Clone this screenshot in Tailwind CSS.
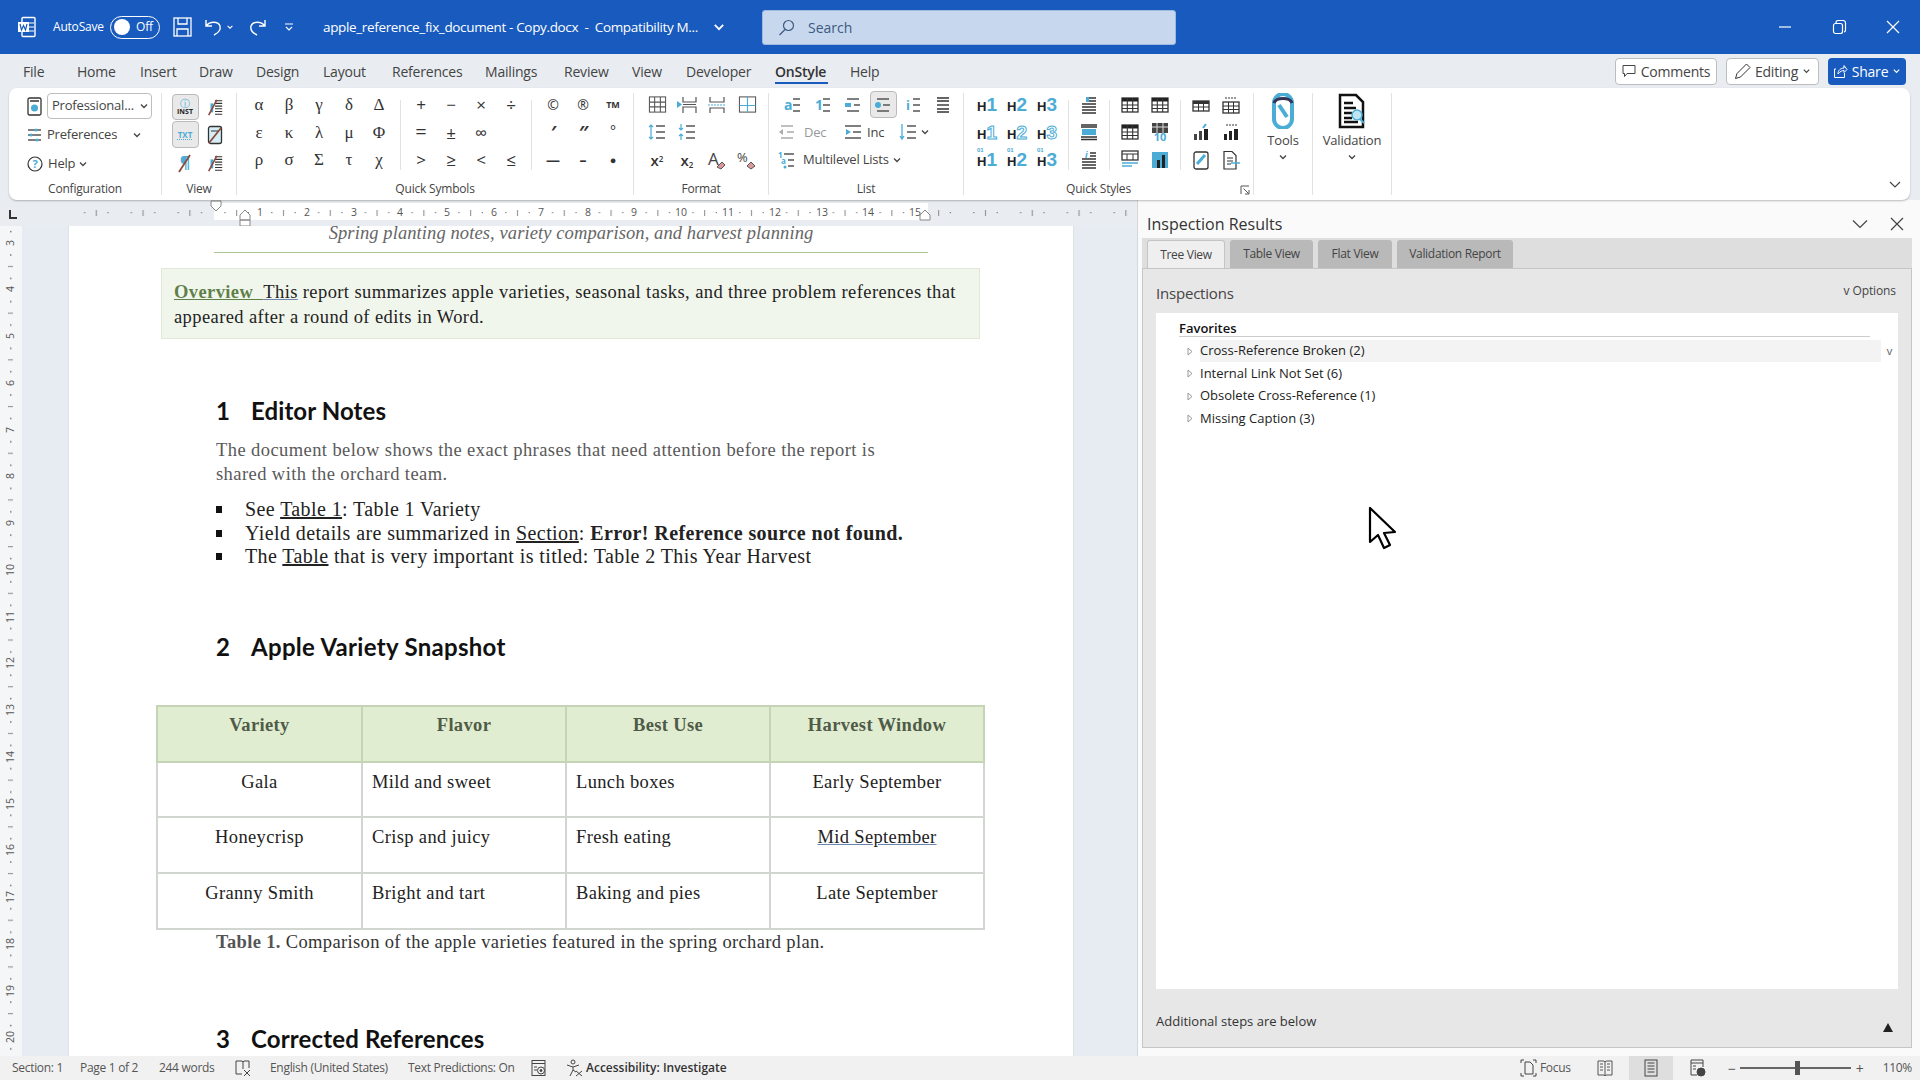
<!DOCTYPE html>
<html><head><meta charset="utf-8"><script src="https://cdn.jsdelivr.net/npm/@tailwindcss/browser@4"></script></head>
<body class="m-0">
<svg width="0" height="0" class="absolute">
<defs>
<symbol id="chev" viewBox="0 0 10 10"><path d="M2 3.500 5 6.500 8 3.500" fill="none" stroke="currentColor" stroke-width="1.300"/></symbol>
<symbol id="tb" viewBox="0 0 18 18"><rect x="1" y="2" width="16" height="14" fill="#fff" stroke="#333" stroke-width="1.300"/><rect x="1" y="2" width="16" height="3.500" fill="#222"/><path d="M1 9h16M1 12.500h16M6.300 2v14M11.700 2v14" stroke="#333" stroke-width="1.100"/></symbol>
<symbol id="tg" viewBox="0 0 20 20"><rect x="1.500" y="2" width="17" height="16" fill="none" stroke="#555" stroke-width="1.100"/><path d="M1.500 7.500h17M1.500 12.500h17M7 2v16M13 2v16" stroke="#555" stroke-width="1.100"/></symbol>
<symbol id="lines" viewBox="0 0 18 18"><path d="M3 2h12M3 5h12M3 13h12M3 16h12" stroke="#333" stroke-width="1.400"/><path d="M3 9h12" stroke="#333" stroke-width="1.400"/></symbol>
<symbol id="ind" viewBox="0 0 18 18"><path d="M9 3h7M9 9h7M9 15h7" stroke="#555" stroke-width="1.400"/></symbol>
<symbol id="liststrike" viewBox="0 0 20 20"><path d="M10 3h8M10 6h8M10 9h8M10 12h8M10 15h8M10 18h8" stroke="#333" stroke-width="1.200"/><rect x="5" y="6" width="3" height="10" fill="#4bacd6"/><path d="M3 19 12 2" stroke="#8c4a3c" stroke-width="1.800"/></symbol>
</defs>
</svg>
<div class="relative w-[1920px] h-[1080px] overflow-hidden flex flex-col bg-[#e9edf1] font-['Open_Sans',sans-serif] text-[#3b3b3b]">

<!-- Title bar -->
<div class="h-[54px] shrink-0 bg-[#185abd] text-white flex items-center text-[13px]">
  <div class="w-[53px] pl-[17px]"><svg width="20" height="22" viewBox="0 0 20 22"><rect x="5" y="1.500" width="13" height="19" rx="1" fill="none" stroke="#fff" stroke-width="1.400"/><rect x="1" y="6" width="11" height="10" fill="#fff"/><path d="M3 8 4.500 14 6.500 9.500 8.500 14 10 8" fill="none" stroke="#185abd" stroke-width="1.200"/><path d="M12 7h5M12 11h5M12 15h5" stroke="#fff"/></svg></div>
  <div class="w-[57px] text-[12px] tracking-[-0.2px]">AutoSave</div>
  <div class="w-[50px] h-[23px] rounded-full border border-white flex items-center pl-[3px] gap-[6px]"><span class="w-[16px] h-[16px] rounded-full bg-white"></span><span class="text-[12px] tracking-[-0.2px]">Off</span></div>
  <div class="ml-[13px] w-[20px]"><svg width="19" height="20" viewBox="0 0 19 20" fill="none" stroke="#fff" stroke-width="1.300"><rect x="1" y="1" width="17" height="18"/><path d="M5 1v6h9V1M4 19v-7h11v7"/></svg></div>
  <div class="ml-[11px] w-[18px]"><svg width="20" height="20" viewBox="0 0 20 20" fill="none" stroke="#fff" stroke-width="1.400"><path d="M2 3v6h6M2 9c4-5 12-5 14 0 1 4-2 7-6 9"/></svg></div>
  <svg class="ml-[4px]" width="8" height="10"><use href="#chev"/></svg>
  <div class="ml-[13px] w-[20px]"><svg width="20" height="20" viewBox="0 0 20 20" fill="none" stroke="#fff" stroke-width="1.400"><path d="M18 3v6h-6M18 9c-4-5-12-5-14 0-1 4 2 7 6 9"/></svg></div>
  <div class="ml-[17px] w-[39px]"><svg width="10" height="10" viewBox="0 0 10 10" fill="none" stroke="#fff" stroke-width="1.200"><path d="M1 2h8M2 5 5 8 8 5"/></svg></div>
  <div class="w-[378px] whitespace-nowrap text-[13.500px] tracking-[-0.35px]">apple_reference_fix_document - Copy.docx &nbsp;-&nbsp; Compatibility M...</div>
  <svg class="ml-[11px]" width="14" height="14"><use href="#chev"/></svg>
  <div class="ml-[36px] w-[414px] h-[35px] rounded-[3px] bg-[#c7d7ee] border border-[#9fb9de] flex items-center pl-[15px] gap-[13px] text-[#3d5a80] text-[14px]"><svg width="17" height="17" viewBox="0 0 17 17" fill="none" stroke="#3d5a80" stroke-width="1.200"><circle cx="10.500" cy="6.500" r="5"/><path d="M7 10.500 1.500 16"/></svg>Search</div>
  <div class="ml-auto flex items-center pr-[19px] gap-[38px]">
    <svg width="16" height="16" viewBox="0 0 16 16"><path d="M2 8h12" stroke="#fff" stroke-width="1.200"/></svg>
    <svg width="16" height="16" viewBox="0 0 16 16" fill="none" stroke="#fff" stroke-width="1.200"><rect x="2.500" y="4.500" width="9" height="10" rx="2"/><path d="M5 4c0-2 1-2.500 2-2.500h5c2 0 2.500 1 2.500 2.500v7c0 1-.5 2-1.500 2"/></svg>
    <svg width="16" height="16" viewBox="0 0 16 16"><path d="M2 2 14 14M14 2 2 14" stroke="#fff" stroke-width="1.200"/></svg>
  </div>
</div>

<!-- Tabs -->
<div class="h-[34px] shrink-0 flex items-center pl-[23px] text-[14px] text-[#444] tracking-[-0.2px]">
  <div class="w-[54px]">File</div><div class="w-[63px]">Home</div><div class="w-[59px]">Insert</div><div class="w-[57px]">Draw</div><div class="w-[67px]">Design</div><div class="w-[69px]">Layout</div><div class="w-[93px]">References</div><div class="w-[79px]">Mailings</div><div class="w-[68px]">Review</div><div class="w-[54px]">View</div><div class="w-[89px]">Developer</div>
  <div class="w-[75px] relative font-semibold text-[#333]">OnStyle<span class="absolute left-0 top-[21px] w-[53px] h-[2px] bg-[#185abd]"></span></div><div class="w-[60px]">Help</div>
  <div class="ml-auto flex items-center gap-[9px] pr-[14px]">
    <div class="w-[102px] h-[27px] rounded-[4px] bg-white border border-[#bdbdbd] flex items-center justify-center gap-[5px]"><svg width="14" height="14" viewBox="0 0 14 14" fill="none" stroke="#444"><path d="M1 1.500h12v8H5L2.500 12.500v-3H1z"/></svg>Comments</div>
    <div class="w-[93px] h-[27px] rounded-[4px] bg-white border border-[#bdbdbd] flex items-center justify-center gap-[4px]"><svg width="17" height="17" viewBox="0 0 17 17" fill="none" stroke="#333"><path d="M1.500 15.500 3 10.500 12.500 1l3.500 3.500L6.500 14z"/></svg>Editing<svg width="9" height="10"><use href="#chev"/></svg></div>
    <div class="w-[78px] h-[27px] rounded-[4px] bg-[#185abd] text-white flex items-center justify-center gap-[4px]"><svg width="15" height="15" viewBox="0 0 15 15" fill="none" stroke="#fff"><path d="M3 5H1.500v8.500h10V9M5 10c0-4 3-6 6-6V1.500L14 5.500l-3 3V6.500c-2 0-4 1-6 3.500z"/></svg>Share<svg width="9" height="10"><use href="#chev"/></svg></div>
  </div>
</div>

<!-- Ribbon -->
<div class="h-[112px] shrink-0 mx-[9px] mr-[10px] bg-white rounded-[8px] shadow-[0_1px_2px_rgba(0,0,0,0.25)] flex text-[13px] text-[#444] relative">
  <!-- Configuration -->
  <div class="w-[153px] my-[5px] border-r border-[#e2e2e2] flex flex-col">
    <div class="h-[84px] flex flex-col pl-[18px] tracking-[-0.2px]">
      <div class="h-[26px] flex items-center gap-[5px]"><svg width="15" height="19" viewBox="0 0 15 19"><rect x="1" y="1" width="13" height="17" rx="1.500" fill="#fff" stroke="#333" stroke-width="1.300"/><path d="M3 4h9" stroke="#333" stroke-width="1.500"/><circle cx="7.500" cy="11" r="3.500" fill="#4bacd6"/></svg><div class="w-[105px] h-[26px] rounded-[4px] border border-[#bdbdbd] flex items-center pl-[4px] justify-between pr-[2px]">Professional...<svg width="10" height="10"><use href="#chev"/></svg></div></div>
      <div class="h-[32px] flex items-center"><svg class="mr-[5px]" width="15" height="16" viewBox="0 0 15 16"><path d="M1 3h13M1 8h13M1 13h13" stroke="#555" stroke-width="1.300"/><circle cx="9" cy="3" r="1.500" fill="#4bacd6"/><circle cx="4" cy="8" r="1.500" fill="#4bacd6"/><circle cx="10" cy="13" r="1.500" fill="#4bacd6"/></svg><span class="w-[85px]">Preferences</span><svg width="10" height="10"><use href="#chev"/></svg></div>
      <div class="h-[26px] flex items-center"><svg class="mr-[5px]" width="16" height="16" viewBox="0 0 16 16"><circle cx="8" cy="8" r="7" fill="none" stroke="#333" stroke-width="1.200"/><text x="8" y="12" text-anchor="middle" font-size="11" font-weight="700" fill="#4bacd6">?</text></svg>Help<svg class="ml-[3px]" width="10" height="10"><use href="#chev"/></svg></div>
    </div>
    <div class="flex-1 text-center text-[12px] pt-[3px] tracking-[-0.2px]">Configuration</div>
  </div>
  <!-- View -->
  <div class="w-[75px] my-[5px] border-r border-[#e2e2e2] flex flex-col">
    <div class="h-[84px] grid grid-cols-[30px_30px] grid-rows-[27px_29px_28px] items-center justify-items-center pl-[8px]">
      <div class="w-[27px] h-[26px] rounded-[4px] border border-[#bbb] bg-[#e9e9e9] flex flex-col items-center justify-center leading-none"><span class="text-[10px] text-[#4bacd6]">ⓘ</span><span class="text-[7px] font-bold text-[#222]">INST</span></div>
      <svg width="18" height="20"><use href="#liststrike"/></svg>
      <div class="w-[27px] h-[27px] rounded-[4px] border border-[#bbb] bg-[#e9e9e9] flex items-center justify-center text-[8px] text-[#4bacd6] font-bold underline decoration-dotted">TXT</div>
      <svg width="16" height="20" viewBox="0 0 16 20"><rect x="1.500" y="1.500" width="13" height="17" rx="2" fill="#d6eef8" stroke="#333" stroke-width="1.300"/><path d="M4 6h8" stroke="#333"/><path d="M2 18 14 3" stroke="#8c4a3c" stroke-width="1.800"/></svg>
      <svg width="18" height="20" viewBox="0 0 18 20"><text x="9" y="15" text-anchor="middle" font-size="16" font-weight="700" fill="#4bacd6">¶</text><path d="M3 19 14 2" stroke="#8c4a3c" stroke-width="1.800"/></svg>
      <svg width="18" height="20"><use href="#liststrike"/></svg>
    </div>
    <div class="flex-1 text-center text-[12px] pt-[3px] tracking-[-0.2px]">View</div>
  </div>
  <!-- Quick Symbols -->
  <div class="w-[397px] my-[5px] border-r border-[#e2e2e2] flex flex-col">
    <div class="h-[84px] shrink-0 flex text-[#333]">
      <div class="ml-[7px] w-[150px] -mt-[2px] grid grid-cols-[repeat(5,30px)] grid-rows-[repeat(3,27.500px)] items-center justify-items-center font-['Liberation_Serif',serif] text-[17px]">
        <span>α</span><span>β</span><span>γ</span><span>δ</span><span>Δ</span><span>ε</span><span>κ</span><span>λ</span><span>μ</span><span>Φ</span><span>ρ</span><span>σ</span><span>Σ</span><span>τ</span><span>χ</span>
      </div>
      <div class="w-px h-[70px] mt-[7px] ml-[6px] bg-[#e2e2e2]"></div>
      <div class="w-[125px] pl-[5px] -mt-[2px] grid grid-cols-[repeat(4,30px)] grid-rows-[repeat(3,27.500px)] items-center justify-items-center text-[17px]">
        <span>+</span><span>−</span><span>×</span><span>÷</span><span class="text-[20px]">=</span><span>±</span><span>∞</span><span></span><span>&gt;</span><span>≥</span><span>&lt;</span><span>≤</span>
      </div>
      <div class="w-px h-[70px] mt-[7px] ml-[5px] bg-[#e2e2e2]"></div>
      <div class="pl-[6px] -mt-[2px] grid grid-cols-[repeat(3,30px)] grid-rows-[repeat(3,27.500px)] items-center justify-items-center text-[14px]">
        <span>©</span><span>®</span><span class="text-[9px] font-bold">TM</span><span class="font-bold italic text-[18px]">′</span><span class="font-bold italic text-[18px]">″</span><span class="-mt-[4px]">°</span><span class="font-bold">—</span><span class="font-bold">–</span><span class="text-[11px]">●</span>
      </div>
    </div>
    <div class="flex-1 text-center text-[12px] pt-[3px] tracking-[-0.2px]">Quick Symbols</div>
  </div>
  <!-- Format -->
  <div class="w-[135px] my-[5px] border-r border-[#e2e2e2] flex flex-col">
    <div class="h-[84px] shrink-0 -mt-[2px] grid grid-cols-[repeat(4,30px)] grid-rows-[repeat(3,27.500px)] items-center justify-items-center pl-[8px] text-[#333]">
      <svg width="19" height="19"><use href="#tg"/></svg>
      <svg width="20" height="18" viewBox="0 0 20 18" fill="none" stroke="#555" stroke-width="1.200"><path d="M6 1v5h13V1M6 17v-6h13v6M6 8.500h13"/><path d="M0 5v7l5-3.500z" fill="#4bacd6" stroke="none"/></svg>
      <svg width="18" height="18" viewBox="0 0 18 18" fill="none" stroke="#555" stroke-width="1.200"><path d="M2 1v5h14V1M2 17v-5h14v5"/><path d="M0 9h18" stroke="#4bacd6" stroke-dasharray="2 1"/></svg>
      <svg width="19" height="19" viewBox="0 0 20 20"><rect x="1.500" y="2" width="17" height="16" fill="none" stroke="#555" stroke-width="1.100"/><path d="M1.500 11h17M10 2v16" stroke="#4bacd6" stroke-width="1.200"/></svg>
      <svg width="18" height="18" viewBox="0 0 18 18"><path d="M3 2v14M1 4l2-2 2 2M1 14l2 2 2-2" fill="none" stroke="#4bacd6" stroke-width="1.200"/><path d="M8 3h9M8 9h9M8 15h9" stroke="#555" stroke-width="1.300"/></svg>
      <svg width="18" height="18" viewBox="0 0 18 18"><path d="M3 1v6M1 5l2 2 2-2M3 17v-6M1 13l2-2 2 2" fill="none" stroke="#4bacd6" stroke-width="1.200"/><path d="M8 3h9M8 9h9M8 15h9" stroke="#555" stroke-width="1.300"/></svg>
      <span></span><span></span>
      <span class="text-[15px] font-semibold">x<sup class="text-[8px]">2</sup></span>
      <span class="text-[15px] font-semibold">x<sub class="text-[8px]">2</sub></span>
      <svg width="20" height="20" viewBox="0 0 20 20"><text x="1" y="15" font-size="17" fill="#444">A</text><path d="M10 17l5-5 3 3-4 4z" fill="#d99" stroke="#555"/></svg>
      <svg width="20" height="20" viewBox="0 0 20 20"><text x="0" y="12" font-size="13" fill="#444">%</text><path d="M10 16l4-4 4 4-4 3z" fill="#d99" stroke="#555"/></svg>
    </div>
    <div class="flex-1 text-center text-[12px] pt-[5px] tracking-[-0.2px]">Format</div>
  </div>
  <!-- List -->
  <div class="w-[195px] my-[5px] border-r border-[#e2e2e2] flex flex-col">
    <div class="h-[84px] shrink-0 -mt-[2px] flex flex-col pl-[9px] tracking-[-0.2px]">
      <div class="h-[27.500px] grid grid-cols-[repeat(6,30px)] items-center justify-items-center">
        <span class="relative w-[18px] h-[18px]"><span class="absolute left-0 top-0 text-[14px] font-bold text-[#4bacd6] leading-[18px]">a</span><svg class="absolute left-0 top-0" width="18" height="18"><use href="#ind"/></svg></span>
        <span class="relative w-[18px] h-[18px]"><span class="absolute left-[1px] top-0 text-[14px] font-bold text-[#4bacd6] leading-[18px]">1</span><svg class="absolute left-0 top-0" width="18" height="18"><use href="#ind"/></svg></span>
        <svg width="18" height="18" viewBox="0 0 18 18"><rect x="1" y="7" width="6" height="4" fill="#4bacd6"/><path d="M3 3h12M10 9h6M3 15h12" stroke="#555" stroke-width="1.400"/></svg>
        <span class="w-[27px] h-[27px] rounded-[4px] border border-[#bbb] bg-[#e9e9e9] flex items-center justify-center"><svg width="18" height="18" viewBox="0 0 18 18"><circle cx="4" cy="9" r="3" fill="#4bacd6"/><path d="M3 3h12M9 9h7M3 15h12" stroke="#555" stroke-width="1.400"/></svg></span>
        <span class="relative w-[18px] h-[18px]"><span class="absolute left-[2px] top-0 text-[13px] font-bold text-[#4bacd6] leading-[18px]">i</span><svg class="absolute left-0 top-0" width="18" height="18"><use href="#ind"/></svg></span>
        <svg width="18" height="18"><use href="#lines"/></svg>
      </div>
      <div class="h-[27.500px] flex items-center"><svg width="18" height="18" viewBox="0 0 18 18"><path d="M3 3h12M9 9h7M3 15h12" stroke="#aaa" stroke-width="1.400"/><path d="M1 9 5 6v6z" fill="#aaa"/></svg><span class="ml-[8px] w-[40px] text-[#999]">Dec</span><svg width="18" height="18" viewBox="0 0 18 18"><path d="M1 3h16M9 9h8M1 15h16" stroke="#555" stroke-width="1.400"/><path d="M7 9 2 6v6z" fill="#4bacd6"/></svg><span class="ml-[5px] w-[32px]">Inc</span><svg width="18" height="18" viewBox="0 0 18 18"><path d="M3 1v15M1 13l2 3 2-3" fill="none" stroke="#4bacd6" stroke-width="1.300"/><path d="M8 3h9M8 9h9M8 15h9" stroke="#555" stroke-width="1.400"/></svg><svg class="ml-[3px]" width="10" height="10"><use href="#chev"/></svg></div>
      <div class="h-[27.500px] flex items-center"><svg width="18" height="20" viewBox="0 0 18 20"><path d="M6 4h10M10 10h6M10 16h6" stroke="#555" stroke-width="1.400"/><text x="0" y="8" font-size="8" font-weight="700" fill="#4bacd6">1</text><text x="3" y="14" font-size="8" font-weight="700" fill="#4bacd6">a</text><circle cx="7" cy="17" r="1.500" fill="#4bacd6"/></svg><span class="ml-[7px]">Multilevel Lists</span><svg class="ml-[3px]" width="10" height="10"><use href="#chev"/></svg></div>
    </div>
    <div class="flex-1 text-center text-[12px] pt-[5px] tracking-[-0.2px]">List</div>
  </div>
  <!-- Quick Styles -->
  <div class="w-[290px] my-[5px] border-r border-[#e2e2e2] flex flex-col relative">
    <div class="h-[84px] shrink-0 flex -mt-[2px]">
      <div class="w-[96px] pl-[8px] grid grid-cols-[repeat(3,30px)] grid-rows-[repeat(3,27.500px)] items-center justify-items-center leading-none font-['Liberation_Sans',sans-serif] font-bold text-[13px] text-[#222]">
        <span>H<span class="text-[19px] text-[#4bacd6]">1</span></span><span>H<span class="text-[19px] text-[#4bacd6]">2</span></span><span>H<span class="text-[19px] text-[#4bacd6]">3</span></span>
        <span>H<span class="text-[19px] text-transparent [-webkit-text-stroke:1px_#4bacd6]">1</span></span><span>H<span class="text-[19px] text-transparent [-webkit-text-stroke:1px_#4bacd6]">2</span></span><span>H<span class="text-[19px] text-transparent [-webkit-text-stroke:1px_#4bacd6]">3</span></span>
        <span class="relative">H<span class="text-[19px] text-[#4bacd6]">1</span><span class="absolute left-0 -top-[3px] text-[6px] text-[#4bacd6]">01</span></span><span class="relative">H<span class="text-[19px] text-[#4bacd6]">2</span><span class="absolute left-0 -top-[3px] text-[6px] text-[#4bacd6]">01</span></span><span class="relative">H<span class="text-[19px] text-[#4bacd6]">3</span><span class="absolute left-0 -top-[3px] text-[6px] text-[#4bacd6]">01</span></span>
      </div>
      <div class="w-px h-[70px] mt-[9px] ml-[8px] bg-[#e2e2e2]"></div>
      <div class="w-[40px] grid grid-rows-[repeat(3,27.500px)] items-center justify-items-center">
        <svg width="18" height="18" viewBox="0 0 18 18"><path d="M2 8h14M2 11h14M2 14h14M2 17h14M9 2h7M9 5h7" stroke="#333" stroke-width="1.300"/><rect x="6" y="1" width="3" height="5" fill="#4bacd6"/></svg>
        <svg width="18" height="18" viewBox="0 0 18 18"><rect x="2" y="6" width="14" height="6" fill="#4bacd6"/><path d="M1 2h16M1 4h16M1 14h16M1 16.500h16" stroke="#333" stroke-width="1.300"/></svg>
        <svg width="18" height="18" viewBox="0 0 18 18"><path d="M2 8h14M2 11h14M2 14h14M2 17h14M10 2h6M10 5h6" stroke="#333" stroke-width="1.300"/><text x="5" y="7" font-size="9" font-style="italic" font-weight="700" fill="#4bacd6">i</text></svg>
      </div>
      <div class="w-px h-[70px] mt-[9px] bg-[#e2e2e2]"></div>
      <div class="w-[70px] pl-[5px] grid grid-cols-[30px_30px] grid-rows-[repeat(3,27.500px)] items-center justify-items-center">
        <svg width="18" height="18"><use href="#tb"/></svg><svg width="18" height="18"><use href="#tb"/></svg>
        <svg width="18" height="18"><use href="#tb"/></svg><svg width="18" height="20" viewBox="0 0 18 20"><rect x="1" y="1" width="16" height="10" fill="#444"/><path d="M1 5h16M6 1v10M12 1v10" stroke="#ddd"/><text x="9" y="19" text-anchor="middle" font-size="11" font-weight="700" fill="#4bacd6">10</text></svg>
        <svg width="18" height="20" viewBox="0 0 18 20"><rect x="1" y="1" width="16" height="9" fill="#fff" stroke="#333" stroke-width="1.300"/><path d="M1 4h16M6 4v6M12 4v6" stroke="#333"/><path d="M1 13h16M1 16h10" stroke="#4bacd6" stroke-width="1.500"/></svg>
        <svg width="18" height="18" viewBox="0 0 18 18"><rect x="1" y="1" width="16" height="16" fill="#4bacd6"/><path d="M6 17V9h3v8zM11 17V4h3v13z" fill="#222"/></svg>
      </div>
      <div class="w-px h-[70px] mt-[9px] bg-[#e2e2e2]"></div>
      <div class="w-[72px] pl-[5px] grid grid-cols-[30px_30px] grid-rows-[repeat(3,27.500px)] items-center justify-items-center">
        <svg width="18" height="14" viewBox="0 0 18 14"><rect x="1" y="3" width="16" height="10" fill="#fff" stroke="#333" stroke-width="1.300"/><rect x="1" y="3" width="16" height="3" fill="#333"/><path d="M6.500 3v10M11.500 3v10M1 9h16" stroke="#333"/></svg>
        <svg width="18" height="18" viewBox="0 0 18 18"><rect x="1" y="6" width="16" height="11" fill="#fff" stroke="#333" stroke-width="1.300"/><path d="M6.500 6v11M11.500 6v11M1 10h16M1 13.500h16" stroke="#333"/><path d="M3 2h12" stroke="#999" stroke-dasharray="2 1" stroke-width="2"/></svg>
        <svg width="18" height="18" viewBox="0 0 18 18"><path d="M2 17v-6h3v6zM7 17V8h3v9z" fill="#444"/><path d="M12 17V6h4v11z" fill="#222"/><path d="M11 5l3-4" stroke="#4bacd6" stroke-width="2"/></svg>
        <svg width="18" height="18" viewBox="0 0 18 18"><path d="M2 17v-6h3v6zM7 17V8h3v9zM12 17V6h4v11z" fill="#222"/><path d="M4 2h11" stroke="#999" stroke-dasharray="2 1" stroke-width="2"/></svg>
        <svg width="18" height="20" viewBox="0 0 18 20"><rect x="2" y="2" width="14" height="17" rx="2" fill="#fff" stroke="#333" stroke-width="1.300"/><path d="M5 14 13 5" stroke="#4bacd6" stroke-width="3"/></svg>
        <svg width="18" height="20" viewBox="0 0 18 20" fill="none" stroke="#333" stroke-width="1.200"><path d="M2 1.500h8l4 4V19H2zM5 8h6M5 11h6M5 14h4"/><path d="M9 13h9" stroke="#4bacd6" stroke-width="1.500"/></svg>
      </div>
    </div>
    <div class="flex-1 text-center text-[12px] pr-[20px] pt-[5px] tracking-[-0.2px]">Quick Styles</div>
    <svg class="absolute right-[3px] bottom-[0px]" width="10" height="10" viewBox="0 0 10 10" fill="none" stroke="#555"><path d="M1 9V1h8M3.500 3.500 8.500 8.500M5 9h4V5"/></svg>
  </div>
  <!-- Tools -->
  <div class="w-[59px] my-[5px] border-r border-[#e2e2e2] flex flex-col items-center">
    <svg class="shrink-0" width="24" height="36" viewBox="0 0 24 36"><rect x="3" y="1" width="18" height="34" rx="9" fill="none" stroke="#4bacd6" stroke-width="4"/><path d="M3 10c2-6 16-6 18 0" stroke="#335" stroke-width="3" fill="none"/><path d="M8 12 16 24" stroke="#4bacd6" stroke-width="4"/></svg>
    <div class="mt-[2px] leading-[18px] tracking-[-0.2px]">Tools</div>
    <svg class="mt-[2px]" width="10" height="12"><use href="#chev"/></svg>
  </div>
  <!-- Validation -->
  <div class="w-[79px] my-[5px] border-r border-[#e2e2e2] flex flex-col items-center">
    <svg width="28" height="36" viewBox="0 0 28 36"><path d="M2 2h16l7 7v25H2z" fill="#fff" stroke="#111" stroke-width="2.500"/><path d="M6 10h9M6 15h12M6 20h8M6 25h8M6 29h14" stroke="#111" stroke-width="2.500"/><circle cx="19" cy="22" r="5" fill="#bfe4f2" stroke="#4bacd6" stroke-width="1.500"/><path d="M22 26l4 4" stroke="#4bacd6" stroke-width="2"/></svg>
    <div class="mt-[2px] leading-[18px] tracking-[-0.2px]">Validation</div>
    <svg class="mt-[2px]" width="10" height="12"><use href="#chev"/></svg>
  </div>
  <svg class="absolute right-[8px] bottom-[8px]" width="14" height="14" viewBox="0 0 14 14" fill="none" stroke="#444" stroke-width="1.200"><path d="M2 4 7 9l5-5"/></svg>
</div>

<!-- Main -->
<div class="flex h-[856px] shrink-0">
  <!-- Doc side -->
  <div class="w-[1137px] shrink-0 flex flex-col">
    <!-- Horizontal ruler -->
    <svg class="block shrink-0" width="1137" height="26" viewBox="0 0 1137 26">
      <defs><pattern id="rt" patternUnits="userSpaceOnUse" x="260" y="0" width="46.800" height="26"><rect x="11.200" y="12" width="1.200" height="1.200" fill="#777"/><rect x="23" y="10" width="1" height="6" fill="#888"/><rect x="34.600" y="12" width="1.200" height="1.200" fill="#777"/></pattern></defs>
      <rect width="1137" height="26" fill="#e9edf1"/>
      <rect x="214" y="3" width="714" height="17" fill="#fff"/>
      <rect x="72" y="3" width="1062" height="17" fill="url(#rt)"/>
      <path d="M9 10h2v7h6v2H9z" fill="#333"/>
      <g font-size="10.500" fill="#555" text-anchor="middle" font-family="Open Sans">
        <text x="260" y="16">1</text><text x="307" y="16">2</text><text x="354" y="16">3</text><text x="400" y="16">4</text><text x="447" y="16">5</text><text x="494" y="16">6</text><text x="541" y="16">7</text><text x="588" y="16">8</text><text x="634" y="16">9</text><text x="681" y="16">10</text><text x="728" y="16">11</text><text x="775" y="16">12</text><text x="822" y="16">13</text><text x="868" y="16">14</text><text x="915" y="16">15</text>
      </g>
      <path d="M211 1h10v5l-5 5-5-5z" fill="#fff" stroke="#888"/>
      <path d="M240 15l5-5 5 5v5h-10zM240 20h10v6h-10z" fill="#fff" stroke="#888"/>
      <path d="M920 20v-5l5-5 5 5v5z" fill="#fff" stroke="#888"/>
    </svg>
    <div class="flex h-[830px] overflow-hidden">
      <!-- Vertical ruler -->
      <svg class="block shrink-0" width="22" height="830" viewBox="0 0 22 830">
        <defs><pattern id="rv" patternUnits="userSpaceOnUse" x="0" y="17" width="22" height="46.700"><rect x="10" y="11.200" width="1.500" height="1.500" fill="#777"/><rect x="8" y="23" width="5" height="1" fill="#888"/><rect x="10" y="34.600" width="1.500" height="1.500" fill="#777"/></pattern></defs>
        <rect width="22" height="830" fill="#f5f6f8"/><rect width="22" height="830" fill="url(#rv)"/>
        <g font-size="10.500" fill="#555" text-anchor="middle" font-family="Open Sans">
          <text transform="translate(14,17) rotate(-90)">3</text><text transform="translate(14,63) rotate(-90)">4</text><text transform="translate(14,110) rotate(-90)">5</text><text transform="translate(14,157) rotate(-90)">6</text><text transform="translate(14,204) rotate(-90)">7</text><text transform="translate(14,250) rotate(-90)">8</text><text transform="translate(14,297) rotate(-90)">9</text><text transform="translate(14,344) rotate(-90)">10</text><text transform="translate(14,391) rotate(-90)">11</text><text transform="translate(14,437) rotate(-90)">12</text><text transform="translate(14,484) rotate(-90)">13</text><text transform="translate(14,531) rotate(-90)">14</text><text transform="translate(14,578) rotate(-90)">15</text><text transform="translate(14,624) rotate(-90)">16</text><text transform="translate(14,671) rotate(-90)">17</text><text transform="translate(14,718) rotate(-90)">18</text><text transform="translate(14,765) rotate(-90)">19</text><text transform="translate(14,811) rotate(-90)">20</text>
        </g>
      </svg>
      <div class="w-[46px] shrink-0 bg-[#e6ecf2]"></div>
      <!-- Page -->
      <div class="w-[1006px] shrink-0 bg-white overflow-hidden border-x border-[#dfe3e8] font-['Liberation_Serif',serif] text-[18.500px] tracking-[0.35px] text-[#333]">
        <div class="-mt-[5px] ml-[145px] w-[714px] h-[24px] leading-[24px] text-center italic text-[#666] tracking-[0.1px]">Spring planting notes, variety comparison, and harvest planning</div>
        <div class="ml-[145px] w-[714px] mt-[7px] border-b-[1.500px] border-[#a9c58f]"></div>
        <div class="ml-[92px] w-[819px] h-[71px] mt-[15px] bg-[#f1f6ec] border border-[#e0e8d8] pl-[12px] pt-[11px] leading-[24.500px] text-[#222] whitespace-nowrap tracking-[0.4px]"><span class="font-bold underline text-[#5f7f4a]">Overview&nbsp; </span><span class="underline decoration-[#6b85b0]">This</span> report summarizes apple varieties, seasonal tasks, and three problem references that<br>appeared after a round of edits in Word.</div>
        <h2 class="ml-[147px] mt-[57px] h-[30px] leading-[30px] font-['Lato',sans-serif] font-bold text-[24px] tracking-[0.1px] text-[#111] flex"><span class="w-[35px]">1</span>Editor Notes</h2>
        <p class="ml-[147px] mt-[12px] leading-[24px] text-[#595959] whitespace-nowrap tracking-[0.42px]">The document below shows the exact phrases that need attention before the report is<br>shared with the orchard team.</p>
        <ul class="ml-[147px] mt-[12px] leading-[23.500px] text-[#222] text-[20px] tracking-[0.4px]">
          <li class="flex items-center"><span class="w-[6px] h-[7px] bg-[#111] mr-[23px]"></span><span>See <u>Table 1</u>: Table 1 Variety</span></li>
          <li class="flex items-center"><span class="w-[6px] h-[7px] bg-[#111] mr-[23px]"></span><span>Yield details are summarized in <u>Section</u>: <b>Error! Reference source not found.</b></span></li>
          <li class="flex items-center"><span class="w-[6px] h-[7px] bg-[#111] mr-[23px]"></span><span>The <u>Table</u> that is very important is titled: Table 2 This Year Harvest</span></li>
        </ul>
        <h2 class="ml-[147px] mt-[63px] h-[30px] leading-[30px] font-['Lato',sans-serif] font-bold text-[24px] tracking-[0.3px] text-[#111] flex"><span class="w-[35px]">2</span>Apple Variety Snapshot</h2>
        <table class="ml-[87px] mt-[43px] w-[827px] h-[223px] border-collapse table-fixed text-[#222] leading-[24px] border-2 border-[#c4d4b4]">
          <colgroup><col class="w-[205px]"><col class="w-[204px]"><col class="w-[204px]"><col class="w-[214px]"></colgroup>
          <tr class="h-[56px] bg-[#e1edd0] font-bold text-[#4f5b48]"><td class="border-2 border-[#c4d4b4] align-top pt-[6px] text-center">Variety</td><td class="border-2 border-[#c4d4b4] align-top pt-[6px] text-center">Flavor</td><td class="border-2 border-[#c4d4b4] align-top pt-[6px] text-center">Best Use</td><td class="border-2 border-[#c4d4b4] align-top pt-[6px] text-center">Harvest Window</td></tr>
          <tr class="h-[55px]"><td class="border-2 border-[#d2d6d0] align-top pt-[7px] text-center">Gala</td><td class="border-2 border-[#d2d6d0] align-top pt-[7px] pl-[9px]">Mild and sweet</td><td class="border-2 border-[#d2d6d0] align-top pt-[7px] pl-[9px]">Lunch boxes</td><td class="border-2 border-[#d2d6d0] align-top pt-[7px] text-center">Early September</td></tr>
          <tr class="h-[56px]"><td class="border-2 border-[#d2d6d0] align-top pt-[7px] text-center">Honeycrisp</td><td class="border-2 border-[#d2d6d0] align-top pt-[7px] pl-[9px]">Crisp and juicy</td><td class="border-2 border-[#d2d6d0] align-top pt-[7px] pl-[9px]">Fresh eating</td><td class="border-2 border-[#d2d6d0] align-top pt-[7px] text-center underline decoration-[#6b85b0]">Mid September</td></tr>
          <tr class="h-[56px]"><td class="border-2 border-[#d2d6d0] align-top pt-[7px] text-center">Granny Smith</td><td class="border-2 border-[#d2d6d0] align-top pt-[7px] pl-[9px]">Bright and tart</td><td class="border-2 border-[#d2d6d0] align-top pt-[7px] pl-[9px]">Baking and pies</td><td class="border-2 border-[#d2d6d0] align-top pt-[7px] text-center">Late September</td></tr>
        </table>
        <p class="ml-[147px] h-[24px] leading-[24px] text-[#333]"><b class="text-[#555]">Table 1.</b> Comparison of the apple varieties featured in the spring orchard plan.</p>
        <h2 class="ml-[147px] mt-[70px] h-[30px] leading-[30px] font-['Lato',sans-serif] font-bold text-[24px] tracking-[0.15px] text-[#111] flex"><span class="w-[35px]">3</span>Corrected References</h2>
      </div>
      <div class="flex-1 bg-[#e6ecf2]"></div>
    </div>
  </div>
  <!-- Panel -->
  <div class="flex-1 bg-[#fafafa] border-l border-[#d5d8db] flex flex-col pl-[4px] pr-[8px] pb-[8px]">
    <div class="h-[38px] shrink-0 flex items-center pl-[5px] pt-[9px] text-[16px] text-[#333]">Inspection Results
      <svg class="ml-auto mr-[22px]" width="16" height="16" viewBox="0 0 16 16" fill="none" stroke="#444" stroke-width="1.200"><path d="M1 4.500 8 11.500 15 4.500"/></svg>
      <svg class="mr-[8px]" width="14" height="14" viewBox="0 0 14 14" fill="none" stroke="#444" stroke-width="1.200"><path d="M1 1 13 13M13 1 1 13"/></svg>
    </div>
    <div class="flex-1 flex flex-col bg-[#dedede]">
      <div class="h-[30px] shrink-0 flex items-end pl-[5px] gap-[5px] text-[12px] text-[#444] tracking-[-0.3px]">
        <div class="w-[78px] h-[28px] bg-[#efefef] border border-b-0 border-[#c4c4c4] rounded-t-[3px] flex items-center justify-center">Tree View</div>
        <div class="w-[83px] h-[28px] bg-[#b9b9b9] rounded-t-[3px] flex items-center justify-center">Table View</div>
        <div class="w-[74px] h-[28px] bg-[#b9b9b9] rounded-t-[3px] flex items-center justify-center">Flat View</div>
        <div class="w-[116px] h-[28px] bg-[#b9b9b9] rounded-t-[3px] flex items-center justify-center">Validation Report</div>
      </div>
      <div class="flex-1 flex flex-col bg-[#e7e7e7] border border-[#c6c6c6] px-[13px]">
        <div class="h-[44px] shrink-0 flex items-center justify-between text-[15px] text-[#444] tracking-[-0.2px] pt-[4px]">Inspections<span class="text-[12px] -mt-[4px] mr-[2px] tracking-[-0.1px]">v Options</span></div>
        <div class="flex-1 bg-white pt-[8px] pl-[23px] text-[13px] text-[#222] relative">
          <div class="font-semibold text-[#111] mr-[28px] h-[16px] leading-[14px] border-b border-[#ccc]">Favorites</div>
          <div class="mt-[3px] flex flex-col">
            <div class="h-[22px] flex items-center"><svg class="ml-[8px] mr-[7px]" width="6" height="9" viewBox="0 0 6 9" fill="none" stroke="#999"><path d="M1 1l4 3.500L1 8z"/></svg><span class="flex-1 bg-[#f3f3f3] h-full flex items-center pl-0 justify-between">Cross-Reference Broken (2)<span class="bg-white w-[17px] h-full flex items-center justify-center text-[11px] text-[#555]">v</span></span></div>
            <div class="h-[23px] flex items-center"><svg class="ml-[8px] mr-[7px]" width="6" height="9" viewBox="0 0 6 9" fill="none" stroke="#999"><path d="M1 1l4 3.500L1 8z"/></svg>Internal Link Not Set (6)</div>
            <div class="h-[22px] flex items-center"><svg class="ml-[8px] mr-[7px]" width="6" height="9" viewBox="0 0 6 9" fill="none" stroke="#999"><path d="M1 1l4 3.500L1 8z"/></svg>Obsolete Cross-Reference (1)</div>
            <div class="h-[23px] flex items-center"><svg class="ml-[8px] mr-[7px]" width="6" height="9" viewBox="0 0 6 9" fill="none" stroke="#999"><path d="M1 1l4 3.500L1 8z"/></svg>Missing Caption (3)</div>
          </div>
        </div>
        <div class="h-[58px] shrink-0 flex items-center justify-between text-[13px] text-[#333] pt-[8px]">Additional steps are below<svg class="mt-[10px] mr-[5px]" width="10" height="9" viewBox="0 0 10 9"><path d="M5 0l5 9H0z" fill="#222"/></svg></div>
      </div>
    </div>
  </div>
</div>

<!-- Status bar -->
<div class="h-[24px] shrink-0 flex items-center bg-[#f1f1f1] text-[12px] text-[#555] tracking-[-0.3px] pl-[12px] whitespace-nowrap">
  <span class="w-[68px]">Section: 1</span><span class="w-[79px]">Page 1 of 2</span><span class="w-[75px]">244 words</span>
  <svg class="mr-[18px]" width="18" height="18" viewBox="0 0 18 18" fill="none" stroke="#444"><path d="M2 2h6l1 1 1-1h5v7M9 3v7M2 2v13h6"/><path d="M10 11l6 6M16 11l-6 6"/></svg>
  <span class="w-[138px] tracking-[-0.3px]">English (United States)</span><span class="w-[122px] tracking-[-0.3px]">Text Predictions: On</span>
  <svg class="mr-[17px]" width="18" height="18" viewBox="0 0 18 18" fill="none" stroke="#444"><rect x="2" y="1.500" width="13" height="15"/><path d="M2 4.500h13M4 8h3M4 11h3"/><circle cx="11" cy="11.500" r="3.500"/><circle cx="11" cy="11.500" r="1" fill="#444"/></svg>
  <svg class="mr-[3px]" width="18" height="18" viewBox="0 0 18 18" fill="none" stroke="#444"><circle cx="8" cy="3" r="2"/><path d="M2 6l6 2 6-2M8 8v3l-3 6M8 11l3 2"/><path d="M11 12l6 5M17 12l-6 5"/></svg>
  <b class="font-semibold text-[#333] tracking-[0px]">Accessibility: Investigate</b>
  <div class="ml-auto flex items-center h-full pr-[8px]">
    <svg class="mr-[3px]" width="17" height="18" viewBox="0 0 17 18" fill="none" stroke="#444"><path d="M1 4V1h3M13 1h3v3M1 14v3h3M13 17h3v-3"/><path d="M5 3h5l3 3v9H5z"/></svg>
    <span class="w-[57px]">Focus</span>
    <svg class="mr-[6px]" width="16" height="18" viewBox="0 0 16 18" fill="none" stroke="#555"><path d="M1 2h6l1 1 1-1h6v14H9l-1 1-1-1H1zM8 3v13M3 5h3M3 8h3M3 11h3M10 5h3M10 8h3M10 11h3"/></svg>
    <div class="w-[44px] h-[24px] bg-[#dedede] mx-[10px] flex items-center justify-center"><svg width="14" height="18" viewBox="0 0 14 18" fill="none" stroke="#444"><rect x="1" y="1" width="12" height="16"/><path d="M3.500 4h7M3.500 7h7M3.500 10h7M3.500 13h7"/></svg></div>
    <svg class="ml-[6px] mr-[22px]" width="17" height="18" viewBox="0 0 17 18" fill="none" stroke="#444"><path d="M2 1h12v7M2 1v15h6M2 4h12M4 7h3M4 10h3"/><circle cx="12" cy="13" r="4" fill="#444"/></svg>
    <span class="text-[14px] mr-[4px]">−</span>
    <div class="w-[111px] h-[1.500px] bg-[#666] relative"><span class="absolute left-[55px] -top-[6px] w-[5px] h-[14px] bg-[#555]"></span></div>
    <span class="text-[14px] ml-[5px] w-[27px]">+</span>
    <span>110%</span>
  </div>
</div>

<!-- Mouse cursor -->
<svg class="absolute left-[1368px] top-[506px]" width="30" height="44" viewBox="0 0 30 44"><path d="M2 2v34l8-7 6 13 6-3-6-12 11-1z" fill="#fff" stroke="#000" stroke-width="2.200" stroke-linejoin="round"/></svg>
</div>
</body></html>
